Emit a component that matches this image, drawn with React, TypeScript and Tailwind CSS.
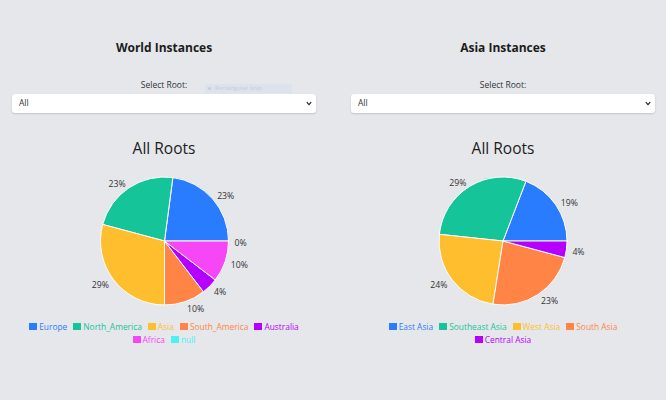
import React from 'react';

type Slice = { name: string; value: number; color: string };

const worldData: Slice[] = [
  { name: 'Europe', value: 11, color: '#2a7cff' },
  { name: 'North_America', value: 11, color: '#16c49a' },
  { name: 'Asia', value: 14, color: '#febe2e' },
  { name: 'South_America', value: 5, color: '#ff8445' },
  { name: 'Australia', value: 2, color: '#b500ff' },
  { name: 'Africa', value: 5, color: '#f746f6' },
  { name: 'null', value: 0, color: '#4cf2f2' },
];

const asiaData: Slice[] = [
  { name: 'East Asia', value: 23, color: '#2a7cff' },
  { name: 'Southeast Asia', value: 35, color: '#16c49a' },
  { name: 'West Asia', value: 29, color: '#febe2e' },
  { name: 'South Asia', value: 28, color: '#ff8445' },
  { name: 'Central Asia', value: 5, color: '#b500ff' },
];

const rad = (d: number) => (d * Math.PI) / 180;

const PieChart: React.FC<{ data: Slice[]; cx: number }> = ({ data, cx }) => {
  const cy = 82;
  const r = 64;
  const total = data.reduce((s, d) => s + d.value, 0);
  let angle = 0;

  const slices = data.map((d) => {
    const start = angle;
    const sweep = (d.value / total) * 360;
    angle += sweep;
    const end = angle;
    const mid = (start + end) / 2;
    const x0 = cx + r * Math.cos(rad(start));
    const y0 = cy - r * Math.sin(rad(start));
    const x1 = cx + r * Math.cos(rad(end));
    const y1 = cy - r * Math.sin(rad(end));
    const large = sweep > 180 ? 1 : 0;
    const path = `M ${cx} ${cy} L ${x0} ${y0} A ${r} ${r} 0 ${large} 0 ${x1} ${y1} Z`;
    const lx = cx + 70 * Math.cos(rad(mid));
    const ly = cy - 70 * Math.sin(rad(mid)) + 1.5;
    return { ...d, path, lx, ly, pct: Math.round((d.value / total) * 100), anchor: lx >= cx ? 'start' : 'end' };
  });

  return (
    <svg width="304" height="160" className="block">
      {slices.map((s) =>
        s.value > 0 ? <path key={s.name} d={s.path} fill={s.color} stroke="#fff" strokeWidth="1" /> : null
      )}
      {slices.map((s) => (
        <text
          key={s.name + '-l'}
          x={s.lx}
          y={s.ly}
          textAnchor={s.anchor}
          dominantBaseline="central"
          fill="#333"
          fontSize="8.7"
        >
          {s.pct}%
        </text>
      ))}
    </svg>
  );
};

const Legend: React.FC<{ data: Slice[] }> = ({ data }) => (
  <ul className="mx-auto mt-px flex w-[270px] flex-wrap justify-center gap-x-[6px] text-[8.4px] leading-[13px]">
    {data.map((d) => (
      <li key={d.name} className="flex items-center gap-[2px]" style={{ color: d.color }}>
        <span className="inline-block h-[7px] w-[8px]" style={{ backgroundColor: d.color }} />
        {d.name}
      </li>
    ))}
  </ul>
);

const Panel: React.FC<{ title: string; data: Slice[]; cx: number }> = ({ title, data, cx }) => (
  <div className="flex flex-col">
    <h2 className="text-center text-[12px] font-bold leading-[18px] text-[#1c1c1c]">{title}</h2>
    <label className="mt-[22px] text-center text-[8.5px] leading-[12px] text-[#333]">Select Root:</label>
    <div className="relative mt-[3px]">
      <select className="block h-[19px] w-full appearance-none rounded-[3px] bg-white pl-[7px] text-[8.5px] text-[#333] shadow-[0_1px_2px_rgba(0,0,0,0.15)] outline-none">
        <option>All</option>
      </select>
      <svg className="pointer-events-none absolute right-[4px] top-[7px]" width="6" height="5" viewBox="0 0 6 5">
        <path d="M0.8 1.2 L3 3.6 L5.2 1.2" fill="none" stroke="#222" strokeWidth="1.2" />
      </svg>
    </div>
    <h3 className="mt-[24px] text-center text-[15.5px] leading-[22px] text-[#1c1c1c]">All Roots</h3>
    <PieChart data={data} cx={cx} />
    <Legend data={data} />
  </div>
);

export default function App() {
  return (
    <div className="relative min-h-[400px] bg-gray-200 font-['Open_Sans','Noto_Sans',sans-serif]">
      <div className="grid grid-cols-[304px_304px] gap-x-[35px] pl-[12px] pt-[39px]">
        <Panel title="World Instances" data={worldData} cx={152.5} />
        <Panel title="Asia Instances" data={asiaData} cx={152} />
      </div>
      <div className="absolute left-[205px] top-[84px] flex h-[9px] w-[87px] items-center gap-[4px] bg-[#dde3ec] pl-[3px] text-[6px] text-[#c5cdd9]">
        <span className="inline-block h-[3px] w-[3px] rounded-full bg-[#c5cdd9]" />
        Rectangular Snip
      </div>
    </div>
  );
}
